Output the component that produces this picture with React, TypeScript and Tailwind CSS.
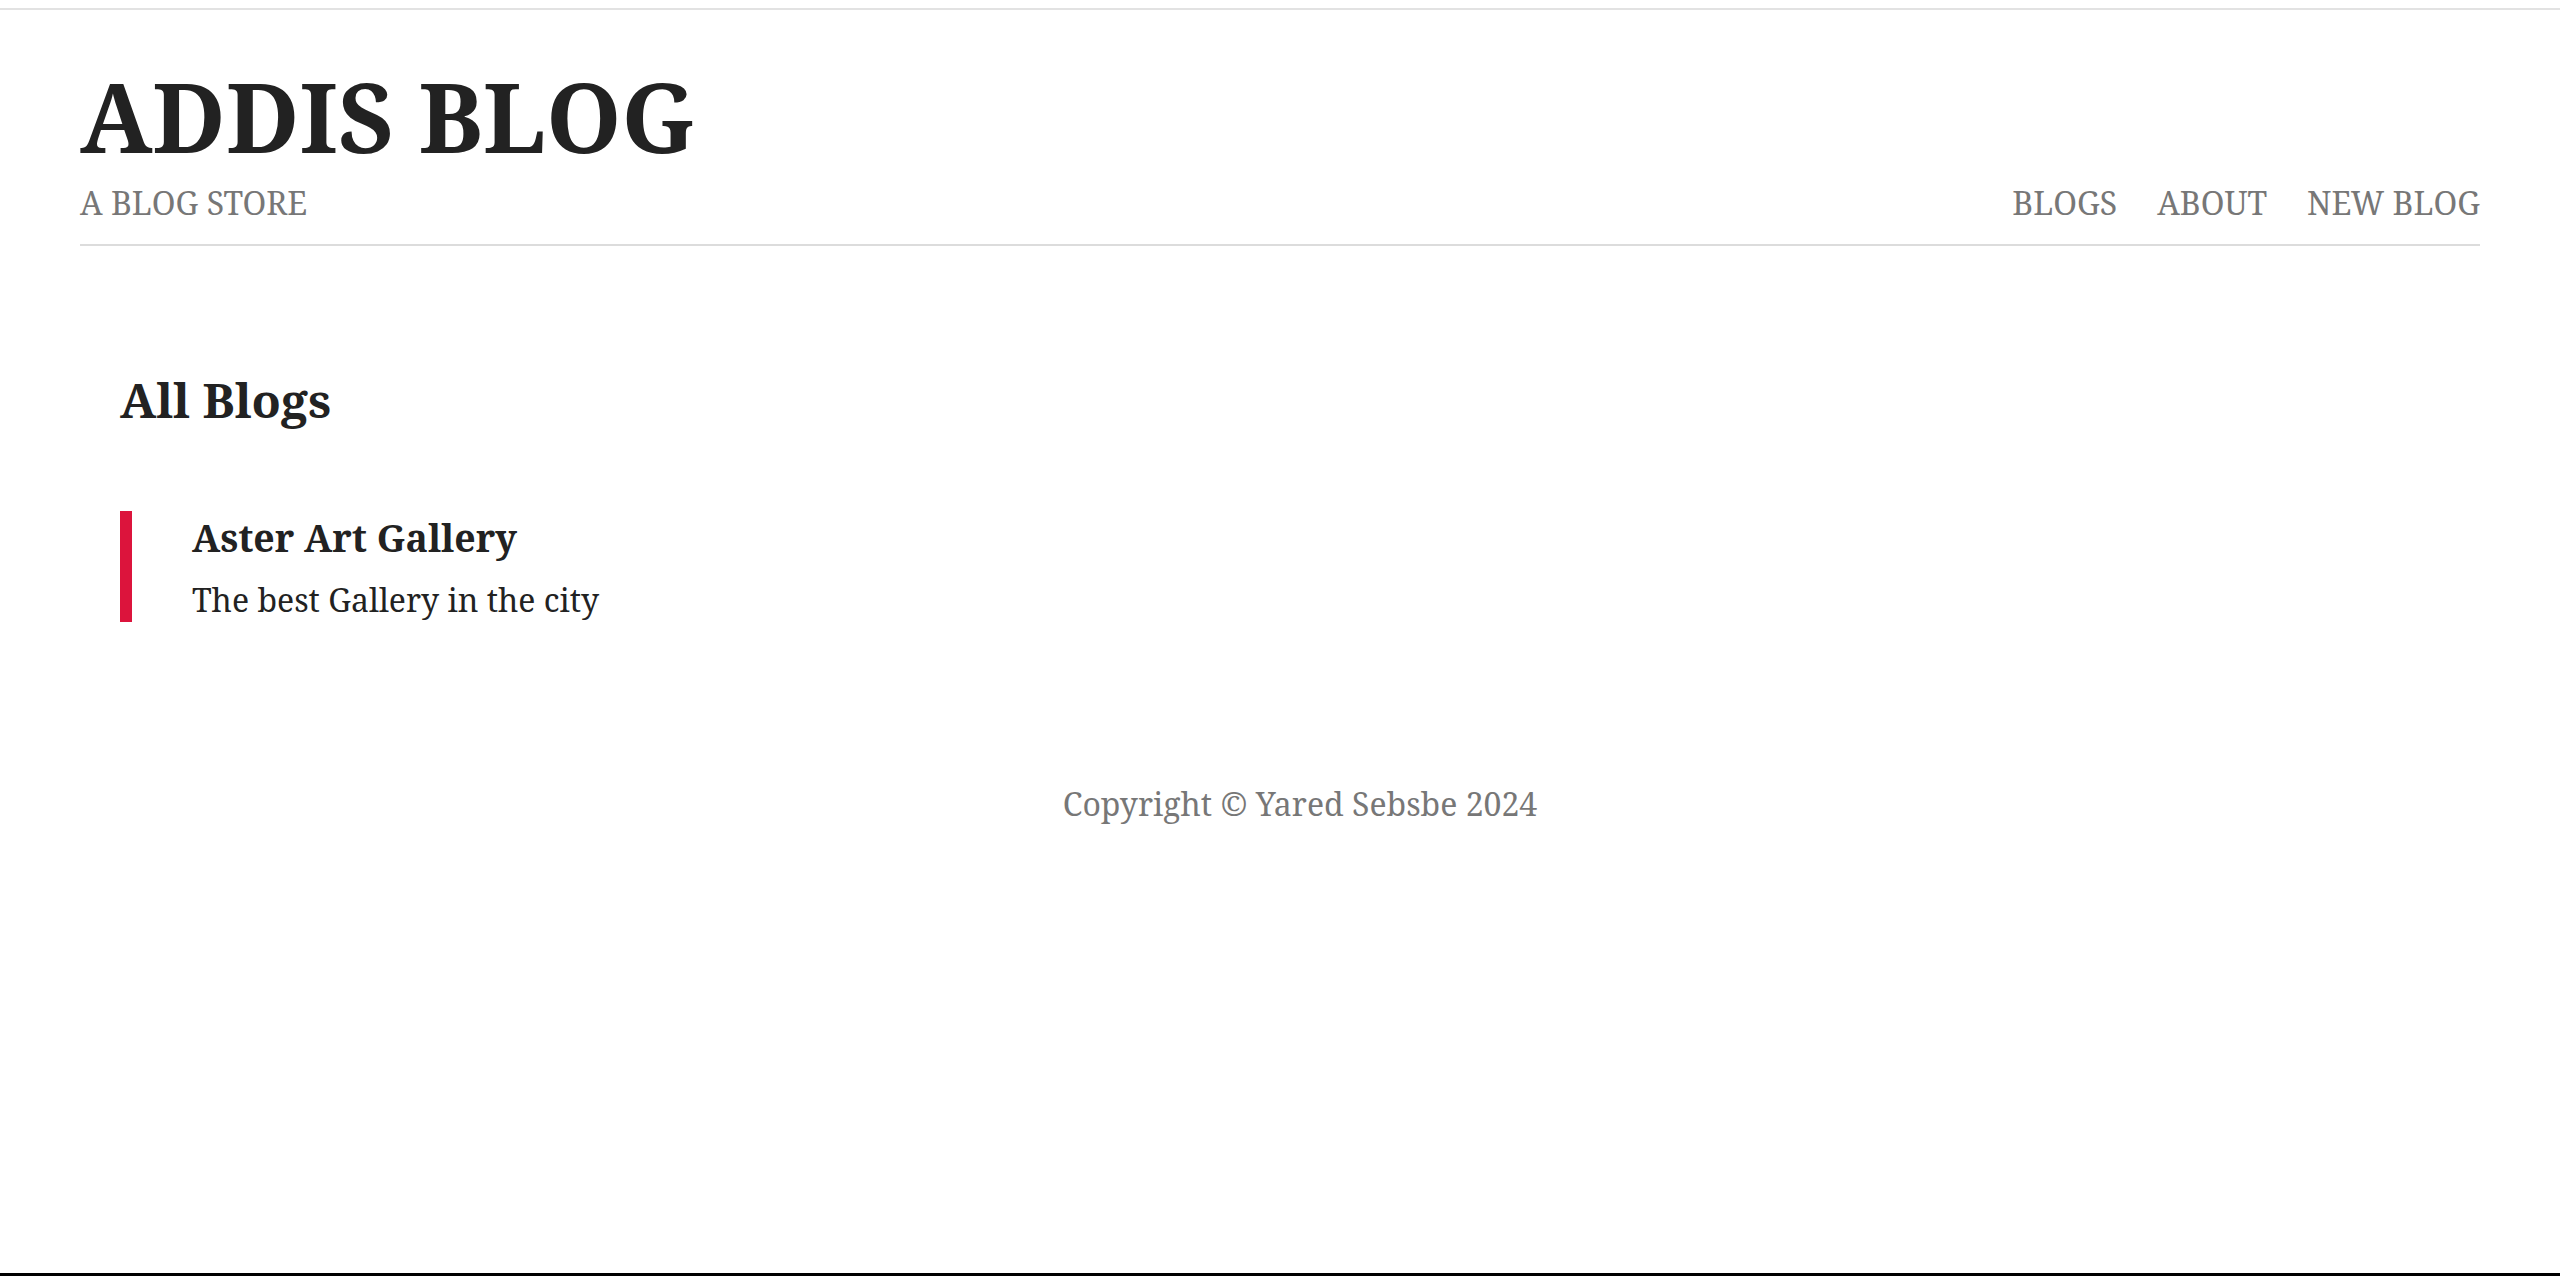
const navLinks = [
  { name: 'BLOGS', href: '#' },
  { name: 'ABOUT', href: '#' },
  { name: 'NEW BLOG', href: '#' },
];

const blogs = [{ title: 'Aster Art Gallery', body: 'The best Gallery in the city' }];

const serif = "font-['Noto_Serif','DejaVu_Serif',serif]";

const App = () => {
  return (
    <div className={`${serif} h-[1276px] flex flex-col bg-white text-[#222]`}>
      <div className="mt-[8px] h-[2px] bg-[#e2e2e2]" />
      <header className="mx-[80px] pt-[58px] pb-[25px] border-b-2 border-[#dcdcdc] flex flex-row justify-between items-end">
        <div>
          <h1 className="text-[96px] leading-[96px] font-bold">ADDIS BLOG</h1>
          <p className="mt-[23px] text-[32px] leading-[32px] text-[#777]">A BLOG STORE</p>
        </div>
        <nav>
          <ul className="flex flex-row gap-[40px] text-[32px] leading-[32px] text-[#777]">
            {navLinks.map((link) => (
              <li key={link.name}>
                <a href={link.href}>{link.name}</a>
              </li>
            ))}
          </ul>
        </nav>
      </header>
      <main className="ml-[120px] mr-[80px]">
        <h2 className="mt-[130px] text-[48px] leading-[48px] font-bold">All Blogs</h2>
        <div className="mt-[87px]">
          {blogs.map((blog) => (
            <div key={blog.title} className="border-l-[12px] border-[#dc143c] pl-[60px]">
              <h3 className="text-[37.44px] leading-[54px] font-bold">{blog.title}</h3>
              <p className="mt-[13px] text-[32px] leading-[44px]">{blog.body}</p>
            </div>
          ))}
        </div>
        <footer className="mt-[166px] text-center text-[32px] leading-[32px] text-[#777]">
          Copyright © Yared Sebsbe 2024
        </footer>
      </main>
      <div className="mt-auto h-[3px] bg-black" />
    </div>
  );
};

export default App;
